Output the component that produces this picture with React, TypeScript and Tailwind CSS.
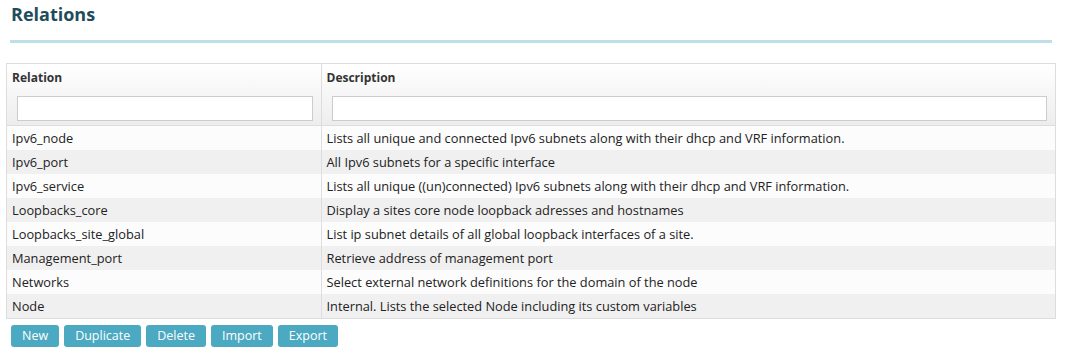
import React from 'react';

// ── Data ──────────────────────────────────────────────────

const ROWS: { name: string; description: string }[] = [
  { name: 'Ipv6_node', description: 'Lists all unique and connected Ipv6 subnets along with their dhcp and VRF information.' },
  { name: 'Ipv6_port', description: 'All Ipv6 subnets for a specific interface' },
  { name: 'Ipv6_service', description: 'Lists all unique ((un)connected) Ipv6 subnets along with their dhcp and VRF information.' },
  { name: 'Loopbacks_core', description: 'Display a sites core node loopback adresses and hostnames' },
  { name: 'Loopbacks_site_global', description: 'List ip subnet details of all global loopback interfaces of a site.' },
  { name: 'Management_port', description: 'Retrieve address of management port' },
  { name: 'Networks', description: 'Select external network definitions for the domain of the node' },
  { name: 'Node', description: 'Internal. Lists the selected Node including its custom variables' },
];

const ACTIONS = ['New', 'Duplicate', 'Delete', 'Import', 'Export'];

// ── Table header cell ─────────────────────────────────────

function HeaderCell({ label, className = '' }: { label: string; className?: string }) {
  return (
    <th className={`p-0 align-top text-left font-normal ${className}`}>
      <div className="h-[61px] bg-gradient-to-b from-white to-[#ededed] px-[5px] pt-[6px]">
        <div className="text-[12px] leading-[16px] font-bold text-[#333]">{label}</div>
        <input
          type="text"
          className="mt-[10px] ml-[5px] block h-[25px] w-[calc(100%-8px)] border border-[#cccccc] bg-white outline-none"
        />
      </div>
    </th>
  );
}

export default function App() {
  return (
    <div
      className="w-[1066px] h-[356px] bg-white text-[#222]"
      style={{ fontFamily: '"Open Sans", "Liberation Sans", sans-serif' }}
    >
      {/* ── Title ── */}
      <div className="px-[10px] pt-[1px]">
        <h1 className="pl-px text-[18px] leading-[26px] font-bold text-[#1f4c5b]">Relations</h1>
        <div className="mt-[13px] h-[3px] w-[1042px] bg-[#bde0e7]" />
      </div>

      {/* ── Table ── */}
      <div className="ml-[6px] mt-[20px] w-[1050px] border border-[#dddddd]">
        <table className="w-full border-collapse text-[12.8px]">
          <thead>
            <tr className="border-b border-[#dddddd]">
              <HeaderCell label="Relation" className="w-[314px] border-r border-[#dddddd]" />
              <HeaderCell label="Description" />
            </tr>
          </thead>
          <tbody>
            {ROWS.map((row, i) => (
              <tr key={row.name} className={i % 2 === 0 ? 'bg-[#fcfcfc]' : 'bg-[#f0f0f0]'}>
                <td className="h-[24px] border-r border-[#dddddd] px-[5px] py-0 leading-[24px]">{row.name}</td>
                <td className="h-[24px] px-[5px] py-0 leading-[24px]">{row.description}</td>
              </tr>
            ))}
          </tbody>
        </table>
      </div>

      {/* ── Actions ── */}
      <div className="mt-[6px] ml-[11px] flex gap-[5px]">
        {ACTIONS.map((a) => (
          <button
            key={a}
            className="h-[22px] rounded-[3px] bg-[#4ba9c1] px-[11px] text-[12.5px] leading-[22px] text-white"
          >
            {a}
          </button>
        ))}
      </div>
    </div>
  );
}
